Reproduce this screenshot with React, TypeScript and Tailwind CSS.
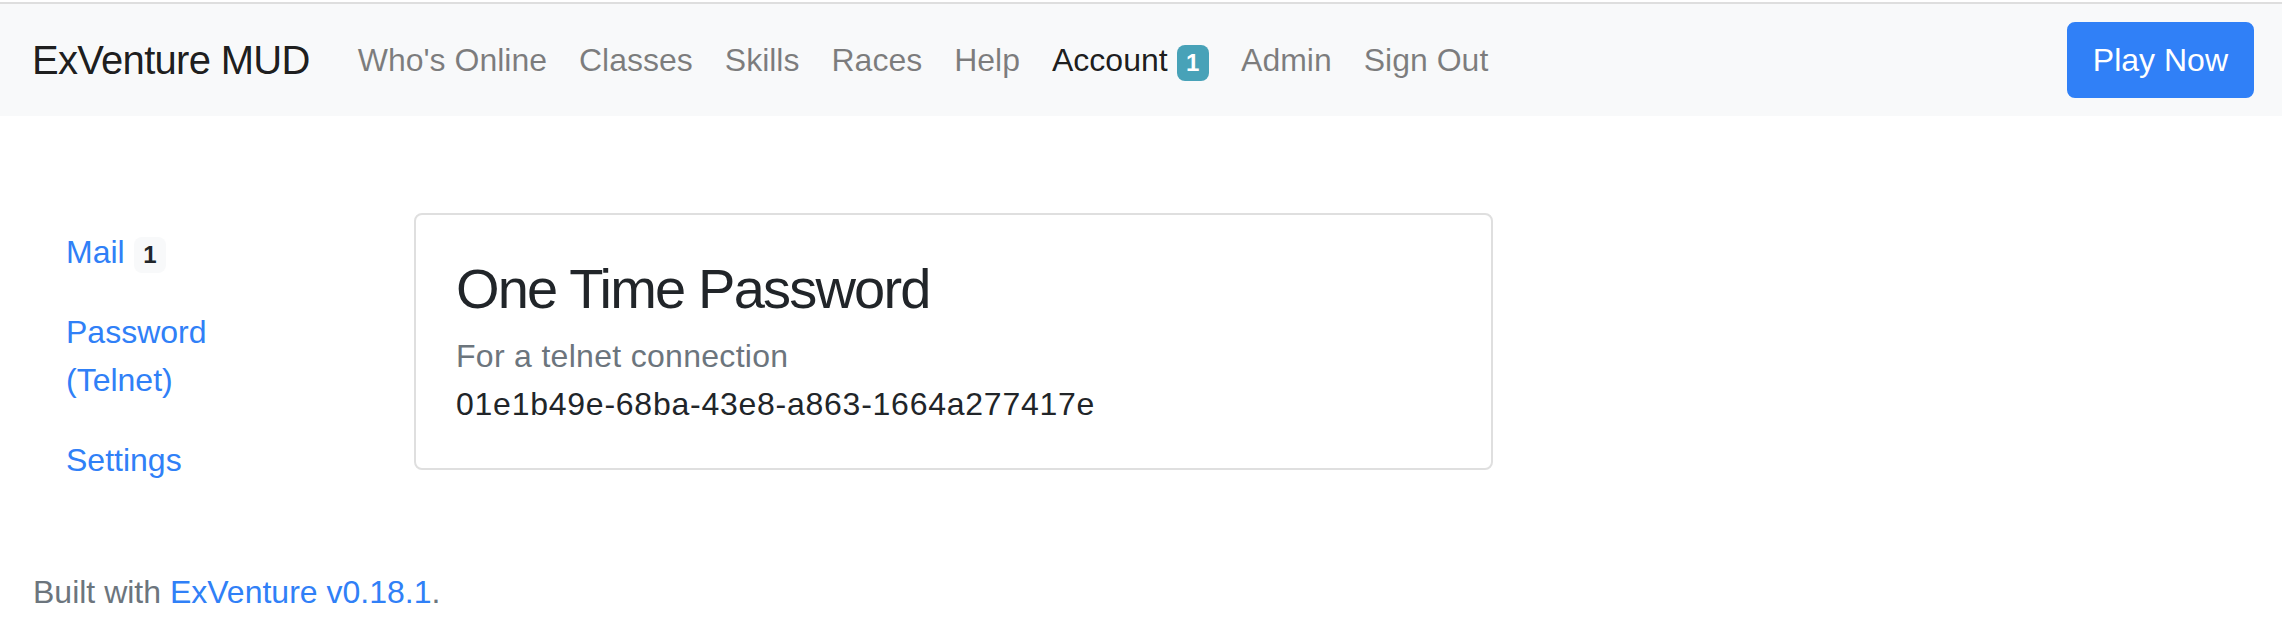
import React from "react";

const navItems = ["Who's Online", "Classes", "Skills", "Races", "Help"];

export default function App() {
  return (
    <div className="min-h-screen bg-white font-['Liberation_Sans',Arial,sans-serif] text-[#212529]">
      <div className="h-[2px] bg-white" />
      <div className="h-[2px] bg-[#dedede]" />
      <nav className="flex h-[112px] items-center bg-[#f8f9fa] pl-[32px] pr-[28px]">
        <a className="mr-[32px] py-[10px] text-[40px] leading-[60px] tracking-[-0.7px] text-black/90">
          ExVenture MUD
        </a>
        <ul className="flex items-center">
          {navItems.map((item) => (
            <li key={item} className="px-[16px] text-[32px] leading-[48px] text-black/50">
              {item}
            </li>
          ))}
          <li className="px-[16px] text-[32px] leading-[48px] text-black/90">
            Account{" "}
            <span className="inline-block rounded-[8px] bg-[#48a2b8] px-[9.6px] py-[6px] align-baseline text-[24px] font-bold leading-none text-white">
              1
            </span>
          </li>
          <li className="px-[16px] text-[32px] leading-[48px] text-black/50">Admin</li>
          <li className="px-[16px] text-[32px] leading-[48px] text-black/50">Sign Out</li>
        </ul>
        <button className="ml-auto rounded-[8px] border-2 border-[#3080f7] bg-[#3080f7] px-[24px] py-[12px] text-[32px] leading-[48px] text-white">
          Play Now
        </button>
      </nav>

      <div className="mt-[96px] flex items-start">
        <div className="flex w-[414px] flex-col pl-[34px]">
          <a className="px-[32px] py-[16px] text-[32px] leading-[48px] text-[#3080f7]">
            Mail{" "}
            <span className="inline-block rounded-[8px] bg-[#f8f9fa] px-[9.6px] py-[6px] align-baseline text-[24px] font-bold leading-none text-[#212529]">
              1
            </span>
          </a>
          <a className="px-[32px] py-[16px] text-[32px] leading-[48px] text-[#3080f7]">
            Password
            <br />
            (Telnet)
          </a>
          <a className="px-[32px] py-[16px] text-[32px] leading-[48px] text-[#3080f7]">Settings</a>
        </div>
        <div className="mt-[1px] w-[1079px] rounded-[8px] border-2 border-[#dfdfdf] p-[40px]">
          <h3 className="mb-[10px] text-[56px] leading-[67px] tracking-[-1.8px] text-[#212529]">
            One Time Password
          </h3>
          <div className="text-[32px] leading-[48px] tracking-[0.3px] text-[#6c757d]">For a telnet connection</div>
          <p className="text-[32px] leading-[48px] tracking-[0.75px] text-[#212529]">
            01e1b49e-68ba-43e8-a863-1664a277417e
          </p>
        </div>
      </div>

      <footer className="mt-[68px] pl-[33px] text-[32px] leading-[48px] text-[#6c757d]">
        Built with <a className="text-[#3080f7]">ExVenture v0.18.1</a>.
      </footer>
    </div>
  );
}
